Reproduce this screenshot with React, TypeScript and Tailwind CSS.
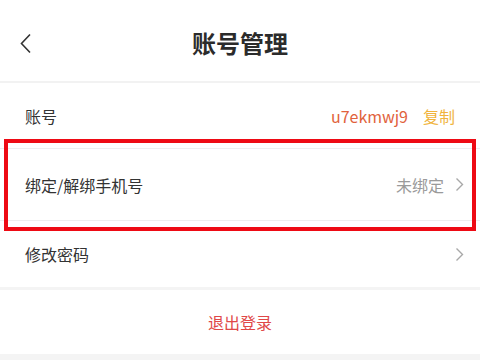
const font = {
  fontFamily: '"Noto Sans CJK SC", "Noto Sans", sans-serif',
};

function Chevron() {
  return (
    <svg width="9" height="15" viewBox="0 0 9 15" fill="none">
      <path d="M1.5 1.5 L7.5 7.5 L1.5 13.5" stroke="#a8a8a8" strokeWidth="1.4" />
    </svg>
  );
}

export default function App() {
  return (
    <div className="relative w-[480px] h-[361px] bg-white overflow-hidden" style={font}>
      {/* header */}
      <div className="relative h-[81px] flex items-center justify-center">
        <button className="absolute left-[19px] top-[33px]">
          <svg width="13" height="21" viewBox="0 0 13 21" fill="none">
            <path d="M11 1.5 L2.5 10.5 L11 19.5" stroke="#333" strokeWidth="1.6" />
          </svg>
        </button>
        <h1 className="text-[24px] font-bold text-[#2b2b2b] leading-none mt-[4px]">账号管理</h1>
      </div>
      <div className="h-[2px] bg-[#f2f2f2]" />

      {/* account */}
      <div className="h-[66px] flex items-center justify-between pl-[25px] pr-[25px] border-b border-[#eeeeee]">
        <span className="text-[16px] text-[#333]">账号</span>
        <div className="flex items-center gap-[15px] text-[16px]">
          <span className="text-[#e1623c]">u7ekmwj9</span>
          <span className="text-[#f0b43c]">复制</span>
        </div>
      </div>

      {/* phone */}
      <div className="h-[72px] flex items-center justify-between pl-[25px] pr-[16px] border-b border-[#eeeeee]">
        <span className="text-[16px] text-[#333]">绑定/解绑手机号</span>
        <div className="flex items-center gap-[11px]">
          <span className="text-[16px] text-[#9a9a9a]">未绑定</span>
          <Chevron />
        </div>
      </div>

      {/* password */}
      <div className="h-[66px] flex items-center justify-between pl-[25px] pr-[16px]">
        <span className="text-[16px] text-[#333]">修改密码</span>
        <Chevron />
      </div>
      <div className="h-[3px] bg-[#f4f4f4]" />

      {/* logout */}
      <div className="h-[64px] flex items-center justify-center">
        <span className="text-[16px] text-[#e04848]">退出登录</span>
      </div>
      <div className="h-[6px] bg-[#f4f4f4]" />

      {/* highlight box */}
      <div className="absolute left-[4px] top-[139px] w-[472px] h-[92px] border-[4px] border-[#ee0a14] pointer-events-none" />
    </div>
  );
}
